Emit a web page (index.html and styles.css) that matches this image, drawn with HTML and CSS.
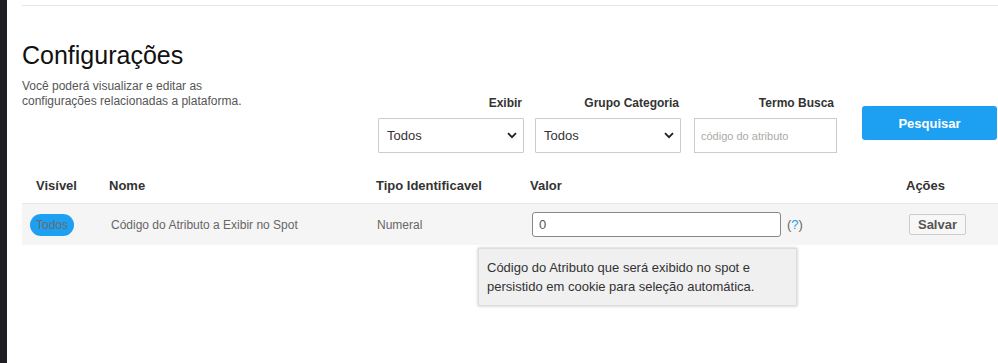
FILE: index.html
```html
<!DOCTYPE html>
<html lang="pt-BR">
<head>
    <meta charset="UTF-8">
    <title>Configurações</title>
    <link rel="stylesheet" href="styles.css">
</head>
<body>
    <div class="side-strip"></div>
    <main class="page">
        <div class="top-rule"></div>

        <h1 class="page-title">Configurações</h1>

        <div class="head-row">
            <p class="page-desc">
                Você poderá visualizar e editar as<br>
                configurações relacionadas a plataforma.
            </p>

            <div class="filters">
                <div class="filter filter-select">
                    <label class="filter-label">Exibir</label>
                    <div class="select-wrap">
                        <select class="select">
                            <option>Todos</option>
                        </select>
                        <svg class="select-arrow" width="10" height="7" viewBox="0 0 10 7">
                            <path d="M1 1.2 L5 5.2 L9 1.2" fill="none" stroke="#222" stroke-width="1.8"/>
                        </svg>
                    </div>
                </div>
                <div class="filter filter-select">
                    <label class="filter-label">Grupo Categoria</label>
                    <div class="select-wrap">
                        <select class="select">
                            <option>Todos</option>
                        </select>
                        <svg class="select-arrow" width="10" height="7" viewBox="0 0 10 7">
                            <path d="M1 1.2 L5 5.2 L9 1.2" fill="none" stroke="#222" stroke-width="1.8"/>
                        </svg>
                    </div>
                </div>
                <div class="filter filter-term">
                    <label class="filter-label">Termo Busca</label>
                    <input class="term-input" type="text" placeholder="código do atributo">
                </div>
                <button class="btn-search">Pesquisar</button>
            </div>
        </div>

        <div class="config-table">
            <div class="table-head">
                <div class="th th-visible">Visível</div>
                <div class="th">Nome</div>
                <div class="th">Tipo Identificavel</div>
                <div class="th">Valor</div>
                <div class="th">Ações</div>
            </div>

            <div class="table-row">
                <div class="td td-visible"><span class="badge">Todos</span></div>
                <div class="td td-name">Código do Atributo a Exibir no Spot</div>
                <div class="td td-type">Numeral</div>
                <div class="td td-value">
                    <input class="value-input" type="text" value="0">
                    <span class="help">(<span class="help-q">?</span>)</span>
                </div>
                <div class="td td-actions"><button class="btn-save">Salvar</button></div>

                <div class="tooltip">
                    Código do Atributo que será exibido no spot e<br>
                    persistido em cookie para seleção automática.
                </div>
            </div>
        </div>
    </main>
</body>
</html>
```

FILE: styles.css
```css
* {
    margin: 0;
    padding: 0;
    box-sizing: border-box;
}

body {
    font-family: 'Liberation Sans', Arial, sans-serif;
    background: #fff;
    color: #333;
    display: flex;
    min-height: 100vh;
}

.side-strip {
    width: 7px;
    background: #1e1f22;
    flex-shrink: 0;
}

.page {
    flex: 1;
    padding: 5px 0 0 15px;
}

.top-rule {
    border-top: 1px solid #e6e6e6;
}

.page-title {
    font-size: 25px;
    font-weight: 400;
    line-height: 30px;
    color: #111;
    margin-top: 34px;
}

.head-row {
    display: flex;
    margin-top: 9px;
}

.page-desc {
    width: 356px;
    font-size: 12px;
    line-height: 15px;
    color: #555;
}

.filters {
    display: flex;
    align-items: flex-start;
    margin-top: 17px;
}

.filter {
    display: flex;
    flex-direction: column;
}

.filter-label {
    font-size: 12px;
    font-weight: 700;
    line-height: 15px;
    color: #333;
    text-align: right;
    margin-bottom: 7px;
    padding-right: 2px;
}

.filter-term .filter-label {
    padding-right: 3px;
}

.filter-select {
    margin-right: 11px;
}

.filter-select + .filter-select {
    margin-right: 13px;
}

.select-wrap {
    position: relative;
    width: 146px;
}

.select {
    appearance: none;
    width: 100%;
    height: 35px;
    border: 1px solid #ccc;
    border-radius: 1px;
    background: #fff;
    font-family: inherit;
    font-size: 13px;
    color: #333;
    padding: 0 8px;
}

.select-arrow {
    position: absolute;
    right: 7px;
    top: 14px;
}

.term-input {
    width: 143px;
    height: 35px;
    border: 1px solid #ccc;
    padding: 0 6px;
    font-family: inherit;
    font-size: 11px;
    color: #333;
}

.term-input::placeholder {
    color: #aaa;
}

.btn-search {
    width: 135px;
    height: 34px;
    margin: 10px 0 0 25px;
    border: none;
    border-radius: 3px;
    background: #1d9ff2;
    color: #fff;
    font-family: inherit;
    font-size: 13px;
    font-weight: 700;
}

.config-table {
    margin-top: 19px;
}

.table-head,
.table-row {
    display: grid;
    grid-template-columns: 79px 267px 154px 376px 1fr;
}

.table-head {
    padding: 6px 0 10px;
    border-bottom: 1px solid #e6e6e6;
}

.th {
    font-size: 13px;
    font-weight: 700;
    line-height: 15px;
    color: #333;
    padding-left: 8px;
}

.th-visible {
    padding-left: 14px;
}

.table-row {
    position: relative;
    height: 41px;
    background: #f5f5f5;
    align-items: center;
}

.td {
    font-size: 12px;
    color: #666;
    padding-left: 9px;
}

.td-visible {
    padding-left: 8px;
}

.td-name {
    padding-left: 10px;
}

.badge {
    display: inline-block;
    width: 44px;
    height: 22px;
    line-height: 22px;
    border-radius: 11px;
    background: #1d9ff2;
    color: #6b6b6b;
    font-size: 12px;
    text-align: center;
}

.td-value {
    display: flex;
    align-items: center;
    padding-left: 10px;
}

.value-input {
    width: 249px;
    height: 25px;
    border: 1px solid #888;
    border-radius: 3px;
    padding: 0 6px;
    font-family: inherit;
    font-size: 13px;
    color: #555;
    background: #fff;
}

.help {
    margin-left: 6px;
    font-size: 13px;
    color: #666;
}

.help-q {
    color: #1d9ff2;
}

.td-actions {
    padding-left: 11px;
}

.btn-save {
    width: 57px;
    height: 21px;
    border: 1px solid #ccc;
    border-radius: 2px;
    background: #f7f7f7;
    color: #555;
    font-family: inherit;
    font-size: 13px;
    font-weight: 700;
}

.tooltip {
    position: absolute;
    left: 456px;
    top: 44px;
    width: 319px;
    padding: 9px 8px;
    background: #f0f0f0;
    border: 1px solid #ddd;
    box-shadow: 0 0 3px rgba(0, 0, 0, 0.25);
    font-size: 13px;
    line-height: 19px;
    color: #333;
}
```
